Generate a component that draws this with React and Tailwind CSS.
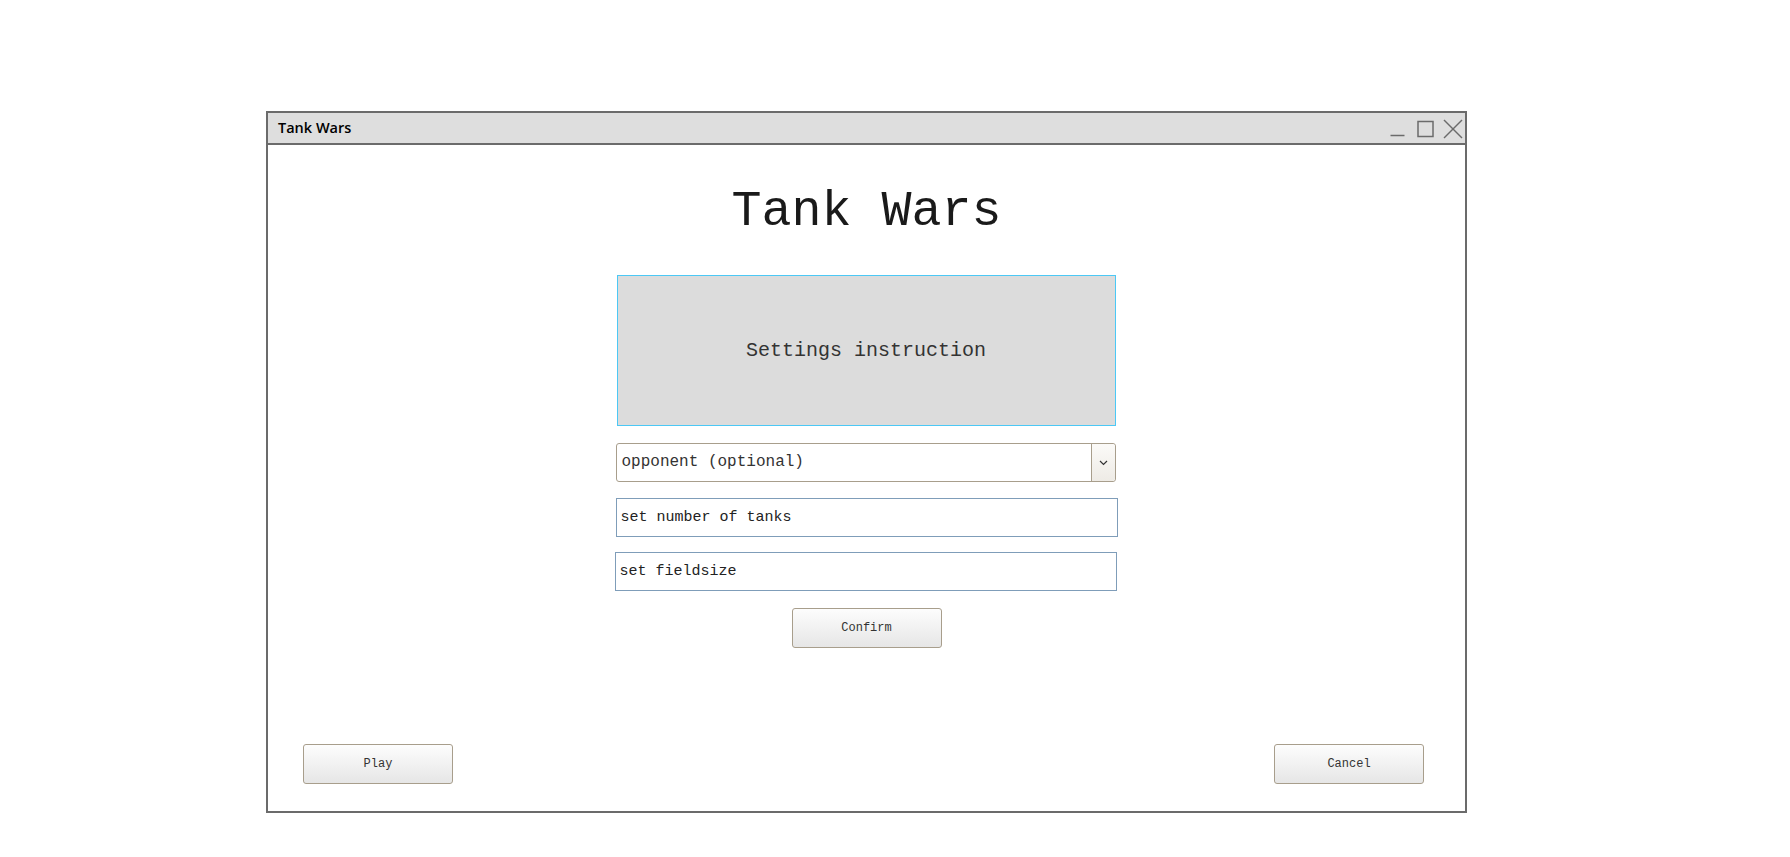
const mono = { fontFamily: '"Liberation Mono", "Courier New", monospace' };

function WindowControls() {
  return (
    <svg width="76" height="30" viewBox="0 0 76 30" fill="none" stroke="#6b6b6b" strokeWidth="1.5">
      <line x1="1.5" y1="22.5" x2="15.5" y2="22.5" />
      <rect x="29" y="8.5" width="15" height="15" />
      <line x1="55" y1="7" x2="73" y2="25" />
      <line x1="73" y1="7" x2="55" y2="25" />
    </svg>
  );
}

function Button({ children, className = '' }) {
  return (
    <button
      className={`h-[40px] w-[150px] rounded-[3px] border border-[#a89e8c] bg-gradient-to-b from-[#fdfdfd] to-[#e6e6e6] text-[12px] text-[#333] ${className}`}
      style={mono}
    >
      {children}
    </button>
  );
}

export default function App() {
  return (
    <div className="min-h-[857px] w-full bg-white pt-[111px] pl-[266px]">
      {/* Window */}
      <div className="flex h-[702px] w-[1201px] flex-col border-2 border-[#6b6b6b] bg-white">
        {/* Title bar */}
        <div className="flex h-[32px] shrink-0 items-center justify-between border-b-2 border-[#6b6b6b] bg-[#dedede] pl-[10px]">
          <span
            className="text-[14.5px] font-semibold text-black"
            style={{ fontFamily: '"Open Sans", "Noto Sans", sans-serif' }}
          >
            Tank Wars
          </span>
          <WindowControls />
        </div>

        {/* Content */}
        <div className="flex flex-1 flex-col items-center" style={mono}>
          <h1 className="mt-[42px] text-[50px] leading-[50px] text-[#1a1a1a]">Tank Wars</h1>

          <div className="mr-[2px] mt-[38px] flex w-[500px] flex-col">
            <div className="ml-[1px] flex h-[151px] w-[499px] items-center justify-center border border-[#4cc8f5] bg-[#dcdcdc] text-[20px] text-[#333]">
              Settings instruction
            </div>

            <div className="mt-[17px] flex h-[39px] w-[500px] items-stretch rounded-[3px] border border-[#a89e8c] bg-white">
              <div className="flex flex-1 items-center pb-[1px] pl-[5px] text-[16px] text-[#333]">
                opponent (optional)
              </div>
              <div className="flex w-[24px] items-center justify-center rounded-r-[3px] border-l border-[#a89e8c] bg-gradient-to-b from-[#fbfaf8] to-[#eeebe5]">
                <svg width="9" height="6" viewBox="0 0 9 6" fill="none" stroke="#333" strokeWidth="1.2">
                  <path d="M1 1l3.5 3.5L8 1" />
                </svg>
              </div>
            </div>

            <div className="mt-[16px] flex h-[39px] w-[502px] items-center border border-[#7f9db9] bg-white pl-[4px] pt-[1px] text-[15px] text-[#222]">
              set number of tanks
            </div>

            <div className="-ml-[1px] mt-[15px] flex h-[39px] w-[502px] items-center border border-[#7f9db9] bg-white pl-[4px] pt-[2px] text-[15px] text-[#222]">
              set fieldsize
            </div>
          </div>

          <Button className="mt-[17px] h-[39px] w-[149px]">Confirm</Button>

          <div className="mt-auto flex w-full justify-between pb-[27px] pl-[35px] pr-[41px]">
            <Button>Play</Button>
            <Button>Cancel</Button>
          </div>
        </div>
      </div>
    </div>
  );
}
